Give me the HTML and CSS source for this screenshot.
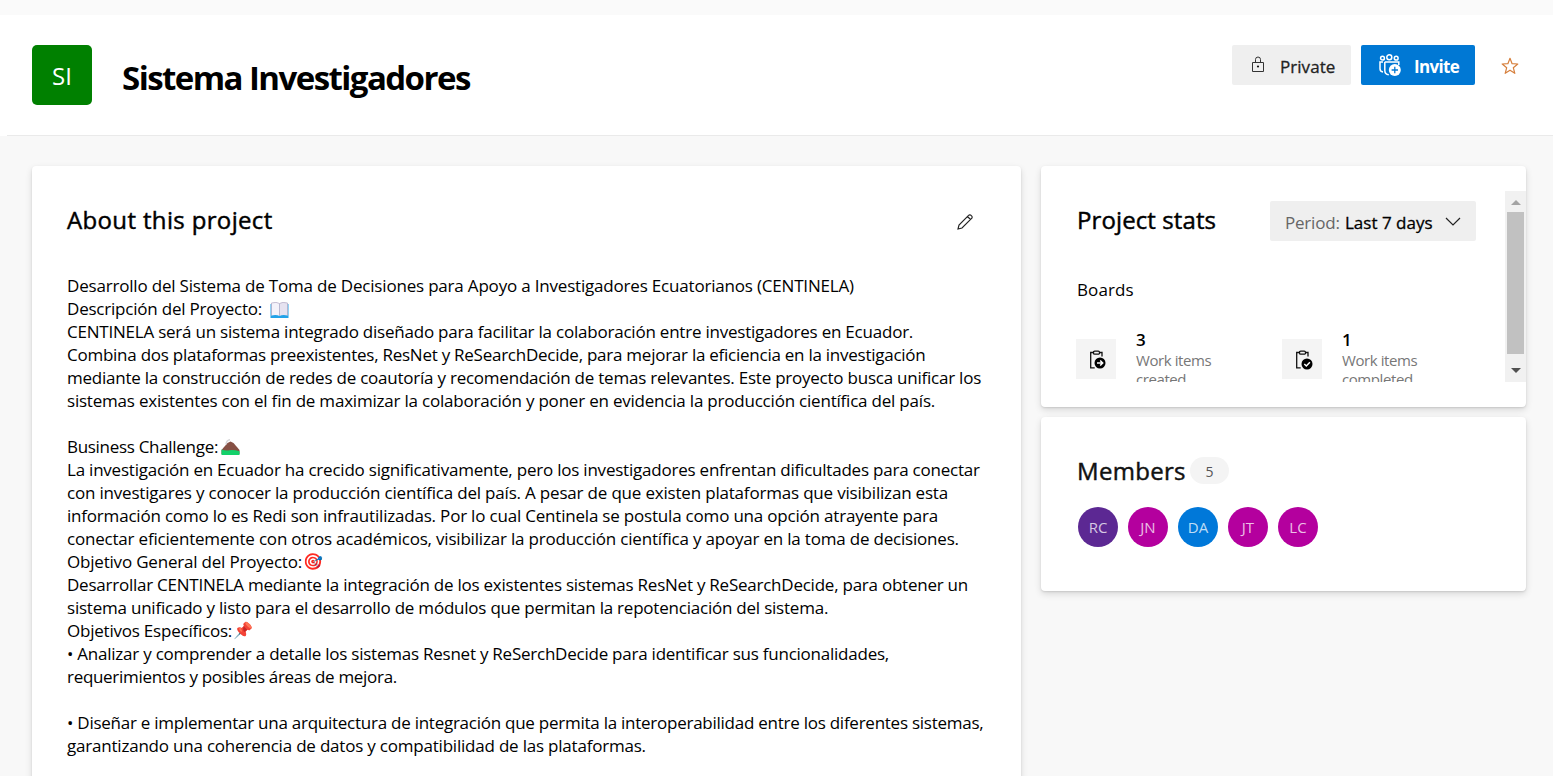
FILE: index.html
```html
<!DOCTYPE html>
<html lang="es">
<head>
<meta charset="utf-8">
<title>Sistema Investigadores</title>
<link rel="stylesheet" href="styles.css">
</head>
<body>
<header class="header">
  <div class="project-icon">SI</div>
  <h1 class="title">Sistema Investigadores</h1>
  <div class="actions">
    <button class="btn btn-private">
      <svg class="lock" viewBox="0 0 14 18" fill="none" stroke="#333"><path d="M1.500 7.500h11v9h-11z"/><path d="M4.500 7V4.500a2.500 2.500 0 0 1 5 0V7"/><circle cx="7" cy="11.500" r="1.100" fill="#111" stroke="none"/></svg>
      <span class="private-text">Private</span>
    </button>
    <button class="btn btn-invite">
      <svg class="people" viewBox="0 0 24 24" fill="none" stroke="#fff" stroke-width="1.500"><circle cx="4.500" cy="5.200" r="1.900"/><circle cx="11.300" cy="4.200" r="2.500"/><circle cx="18.200" cy="5.200" r="1.900"/><path d="M5 9H2v6.500a3.500 3.500 0 0 0 3 3.500M6.800 9h14v3M6.800 9v8.500a4.500 4.500 0 0 0 4 4.300"/><circle cx="16.800" cy="17" r="6" fill="#fff" stroke="none"/><path d="M16.800 13.800v6.400M13.600 17H20" stroke="#0078d4" stroke-width="1.300"/></svg>
      <span class="invite-text">Invite</span>
    </button>
    <svg class="star" viewBox="0 0 18 18" fill="none" stroke="#d67f3c" stroke-width="1.200" stroke-linejoin="round"><path d="M9 1.300l2.100 5.400 5.700.3-4.500 3.700 1.500 5.600L9 13.200l-4.800 3.100 1.500-5.600L1.200 7l5.700-.3z"/></svg>
  </div>
</header>
<main class="main">
  <section class="card about">
    <div class="about-head">
      <h2 class="heading about-title">About this project</h2>
      <svg class="pencil" viewBox="0 0 16 16" fill="none" stroke="#222" stroke-width="1.150"><path d="M1 15l1-4L11.600 1.400a1.700 1.700 0 0 1 2.500 0l.5.5a1.700 1.700 0 0 1 0 2.500L5 14zM10.500 2.500l3 3"/></svg>
    </div>
    <div class="description">
      <div class="line t19">Desarrollo del Sistema de Toma de Decisiones para Apoyo a Investigadores Ecuatorianos (CENTINELA)</div>
      <div class="line t21">Descripción del Proyecto: <svg class="emoji book" viewBox="0 0 18 16"><path d="M0 2h18v14H0z" fill="#22a2e8"/><path d="M1 1q5-1.500 8 .5V14q-3-1.500-8-.5z" fill="#f4f2fa"/><path d="M17 1q-5-1.500-8 .5V14q3-1.500 8-.5z" fill="#e6e2f0"/><path d="M1 13.500V1q5-1.500 8 .5 3-2 8-.5v12.500M9 1.500V14" fill="none" stroke="#b9b0c9" stroke-width=".8"/></svg></div>
      <div class="line t22">CENTINELA será un sistema integrado diseñado para facilitar la colaboración entre investigadores en Ecuador.</div>
      <div class="line t25">Combina dos plataformas preexistentes, ResNet y ReSearchDecide, para mejorar la eficiencia en la investigación</div>
      <div class="line t23">mediante la construcción de redes de coautoría y recomendación de temas relevantes. Este proyecto busca unificar los</div>
      <div class="line t21">sistemas existentes con el fin de maximizar la colaboración y poner en evidencia la producción científica del país.</div>
      <div class="line"></div>
      <div class="line t30">Business Challenge:<svg class="emoji hill" viewBox="0 0 18 16"><path d="M0 11L6 4l3-1.500L12 4l6 7v4H0z" fill="#865044"/><path d="M4.500 5.500Q5 1 8.500.8" fill="none" stroke="#d5d5d8" stroke-width="1.500"/><path d="M0 10.500q4 1.500 8 .8t10 1V16H0z" fill="#13d16a"/></svg></div>
      <div class="line t22">La investigación en Ecuador ha crecido significativamente, pero los investigadores enfrentan dificultades para conectar</div>
      <div class="line t19">con investigares y conocer la producción científica del país. A pesar de que existen plataformas que visibilizan esta</div>
      <div class="line t20">información como lo es Redi son infrautilizadas. Por lo cual Centinela se postula como una opción atrayente para</div>
      <div class="line t20">conectar eficientemente con otros académicos, visibilizar la producción científica y apoyar en la toma de decisiones.</div>
      <div class="line t20">Objetivo General del Proyecto:<span class="glyph">🎯</span></div>
      <div class="line t24">Desarrollar CENTINELA mediante la integración de los existentes sistemas ResNet y ReSearchDecide, para obtener un</div>
      <div class="line t22">sistema unificado y listo para el desarrollo de módulos que permitan la repotenciación del sistema.</div>
      <div class="line t22">Objetivos Específicos:<span class="glyph">📌</span></div>
      <div class="line t24">• Analizar y comprender a detalle los sistemas Resnet y ReSerchDecide para identificar sus funcionalidades,</div>
      <div class="line t30">requerimientos y posibles áreas de mejora.</div>
      <div class="line"></div>
      <div class="line t25">• Diseñar e implementar una arquitectura de integración que permita la interoperabilidad entre los diferentes sistemas,</div>
      <div class="line t21">garantizando una coherencia de datos y compatibilidad de las plataformas.</div>
    </div>
  </section>
  <aside class="side">
    <section class="card stats">
      <div class="stats-scroll">
        <div class="stats-content">
          <div class="stats-head">
            <h2 class="heading stats-title">Project stats</h2>
            <button class="period"><span class="period-label">Period:</span><span class="period-value">Last 7 days</span><svg class="chevron" viewBox="0 0 16 10" fill="none" stroke="#222" stroke-width="1.200"><path d="M1 1l7 7 7-7"/></svg></button>
          </div>
          <div class="boards">Boards</div>
          <div class="items">
            <div class="item">
              <div class="item-icon"><svg viewBox="0 0 18 20" fill="none" stroke="#111" stroke-width="1.300"><path d="M5 2.500H1.700v15.300h4M11 2.500h2v4"/><rect x="4.500" y="1.200" width="6" height="3" rx="1.200"/><circle cx="11" cy="13" r="5.500" fill="#000" stroke="none"/><path d="M8 13h5.500M11.200 10.500L13.700 13l-2.500 2.500" stroke="#fff" stroke-width="1.500"/></svg></div>
              <div class="item-text"><div class="num">3</div><div class="desc">Work items<br>created</div></div>
            </div>
            <div class="item">
              <div class="item-icon"><svg viewBox="0 0 18 20" fill="none" stroke="#111" stroke-width="1.300"><path d="M5 2.500H1.700v15.300h4M11 2.500h2v4"/><rect x="4.500" y="1.200" width="6" height="3" rx="1.200"/><circle cx="12" cy="14" r="5.500" fill="#000" stroke="none"/><path d="M9.300 14l2 2 3.600-3.800" stroke="#fff" stroke-width="1.500"/></svg></div>
              <div class="item-text"><div class="num">1</div><div class="desc">Work items<br>completed</div></div>
            </div>
          </div>
        </div>
        <div class="scrollbar"><i class="arrow up"></i><div class="thumb"></div><i class="arrow down"></i></div>
      </div>
    </section>
    <section class="card members">
      <div class="members-head"><h2 class="heading members-title">Members</h2><span class="count">5</span></div>
      <div class="avatars">
        <span class="avatar purple">RC</span><span class="avatar magenta">JN</span><span class="avatar blue">DA</span><span class="avatar magenta">JT</span><span class="avatar magenta">LC</span>
      </div>
    </section>
  </aside>
</main>
</body>
</html>
```
FILE: styles.css
```css
* { box-sizing: border-box; }
body {
  margin: 0;
  padding-top: 15px;
  height: 776px;
  overflow: hidden;
  background: linear-gradient(#fafafa 15px, #f8f8f8 15px);
  font-family: "Open Sans", "Noto Sans", sans-serif;
  color: #000;
}
h1, h2 { margin: 0; }
button { border: 0; padding: 0; font: inherit; color: inherit; }
svg { display: block; flex: none; }

.header {
  display: flex;
  align-items: flex-start;
  height: 121px;
  padding: 30px 33px 0 32px;
  background: linear-gradient(#eaeaea, #eaeaea) 7px 100% / 100% 1px no-repeat #fff;
}
.project-icon {
  width: 60px;
  height: 60px;
  border-radius: 5px;
  background: #008000;
  color: #fff;
  font-size: 24px;
  line-height: 61px;
  text-align: center;
}
.title {
  margin-left: 30px;
  font-size: 33px;
  font-weight: 700;
  letter-spacing: -1.55px;
  line-height: 65px;
  white-space: nowrap;
}
.actions { display: flex; margin-left: auto; }
.btn { display: flex; align-items: center; height: 40px; border-radius: 2px; }
.btn-private { width: 119px; margin-right: 10px; padding-left: 19px; background: #efefef; color: #222; }
.lock { width: 14px; height: 18px; margin-top: -2px; }
.private-text { margin: 3px 0 0 15px; font-size: 17px; letter-spacing: .05px; -webkit-text-stroke: .3px; }
.btn-invite { width: 114px; padding-left: 17px; background: #0078d4; color: #fff; }
.people { width: 24px; height: 24px; }
.invite-text { margin: 3px 0 0 12px; font-size: 17px; font-weight: 700; letter-spacing: -.68px; }
.star { width: 18px; height: 18px; margin: 12px 1px 0 26px; }

.main { display: flex; align-items: flex-start; gap: 20px; padding: 30px 27px 0 32px; }
.card { background: #fff; border-radius: 4px; box-shadow: 0 3px 7px rgba(0,0,0,.13), 0 1px 2px rgba(0,0,0,.11); }
.heading { font-size: 24px; font-weight: 400; line-height: 32px; white-space: nowrap; -webkit-text-stroke: .45px; }

.about { width: 989px; height: 640px; padding: 38px 35px 0; }
.about-head { display: flex; justify-content: space-between; }
.about-title { letter-spacing: .35px; }
.pencil { width: 16px; height: 16px; margin: 10px 13px 0 0; }
.description { margin-top: 38px; font-size: 17px; white-space: nowrap; }
.line { display: flex; height: 23px; line-height: 23px; white-space: pre; }
.t19 { letter-spacing: -.19px; }
.t20 { letter-spacing: -.198px; }
.t21 { letter-spacing: -.209px; }
.t22 { letter-spacing: -.22px; }
.t23 { letter-spacing: -.231px; }
.t24 { letter-spacing: -.238px; }
.t25 { letter-spacing: -.253px; }
.t30 { letter-spacing: -.3px; }
.emoji { width: 19px; height: 16px; }
.book { margin: 5px 0 0 4px; }
.hill { margin: 4px 0 0 3px; }
.glyph { margin-left: 1px; font-size: 16px; line-height: 23px; }

.side { display: flex; flex-direction: column; gap: 10px; width: 485px; }
.stats { height: 241px; padding: 25px 0; }
.stats-scroll { display: flex; height: 191px; overflow: hidden; }
.stats-content { flex: none; width: 464px; padding: 10px 29px 0 35px; }
.stats-head { display: flex; justify-content: space-between; }
.stats-title { padding: 3px 0 0 1px; letter-spacing: .1px; }
.period { display: flex; width: 206px; height: 40px; padding-left: 15px; border-radius: 2px; background: #efefef; font-size: 17px; line-height: 43px; text-align: left; white-space: nowrap; }
.period-label { width: 60px; color: #666; letter-spacing: -.2px; }
.period-value { width: 87px; letter-spacing: 0; -webkit-text-stroke: .3px; }
.chevron { width: 16px; height: 10px; margin: 16px 0 0 13px; }
.boards { margin-top: 36px; padding-left: 1px; font-size: 17px; line-height: 25px; letter-spacing: .12px; }
.items { display: flex; margin-top: 26px; }
.item { display: flex; flex: none; width: 206px; }
.item-icon { flex: none; width: 40px; height: 40px; margin: 11px 20px 0 0; padding: 11px 0 0 13px; background: #f4f4f4; }
.item-icon svg { width: 18px; height: 20px; }
.item-text { margin-top: -1px; }
.num { font-size: 17px; font-weight: 600; line-height: 25px; }
.desc { margin-top: -1px; color: #777; font-size: 15px; line-height: 19px; letter-spacing: -.42px; }
.scrollbar { display: flex; flex: none; flex-direction: column; align-items: center; width: 21px; background: #f1f1f1; }
.arrow { border: 5px solid transparent; border-top: 0; }
.up { margin: 9px 0 7px; border-bottom: 5px solid #a3a3a3; }
.thumb { width: 17px; height: 142px; background: #c1c1c1; }
.down { margin-top: 14px; border-top: 5px solid #505050; border-bottom: 0; }

.members { height: 174px; padding: 38px 35px 0; }
.members-head { display: flex; }
.members-title { width: 109px; padding-left: 1px; color: #111; letter-spacing: .3px; }
.count { width: 39px; height: 27px; margin: 2px 0 0 5px; border-radius: 14px; background: #f4f4f4; color: #555; font-size: 14px; line-height: 30px; text-align: center; }
.avatars { display: flex; gap: 10px; margin: 20px 0 0 2px; }
.avatar { width: 40px; height: 40px; border-radius: 50%; color: rgba(255,255,255,.75); font-size: 15px; line-height: 40px; text-align: center; }
.purple { background: #5c2893; }
.magenta { background: #b4009e; }
.blue { background: #0078d9; }
```
